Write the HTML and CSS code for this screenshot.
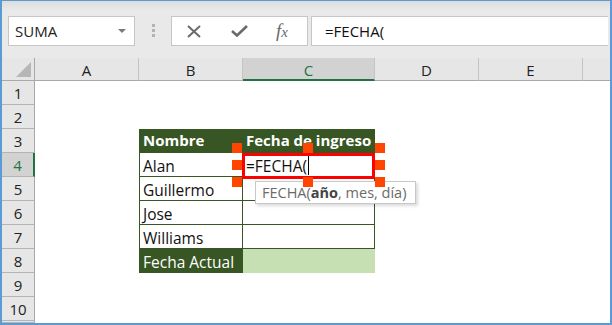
FILE: index.html
```html
<!doctype html>
<html lang="es">
<head>
  <meta charset="UTF-8">
  <meta name="viewport" content="width=device-width, initial-scale=1.0">
  <title>FECHA</title>
  <link rel="stylesheet" href="styles.css">
</head>
<body>
  <div class="window">
    <div class="toolbar">
      <div class="namebox">
        <span>SUMA</span>
        <span class="caret"></span>
      </div>
      <div class="grip"><i></i><i></i><i></i></div>
      <div class="fx-buttons">
        <svg width="16" height="13" viewBox="0 0 16 13"><path d="M2 1 L14 12 M14 1 L2 12" stroke="#6a6a6a" stroke-width="2" fill="none"/></svg>
        <svg width="17" height="12" viewBox="0 0 17 12"><path d="M1 6 L6 10.5 L16 1" stroke="#6a6a6a" stroke-width="2.6" fill="none"/></svg>
        <span class="fx">f<small>x</small></span>
      </div>
      <div class="formula">=FECHA(</div>
    </div>

    <div class="sheet">
      <div class="ch corner"></div>
      <div class="ch">A</div>
      <div class="ch">B</div>
      <div class="ch active">C</div>
      <div class="ch">D</div>
      <div class="ch">E</div>
      <div class="ch last"></div>

      <div class="rh">1</div>
      <div class="rh">2</div>
      <div class="rh">3</div>
      <div class="rh active">4</div>
      <div class="rh">5</div>
      <div class="rh">6</div>
      <div class="rh">7</div>
      <div class="rh">8</div>
      <div class="rh">9</div>
      <div class="rh">10</div>
      <div class="rh"></div>

      <div class="data">
        <div class="cell head left">Nombre</div>
        <div class="cell head">Fecha de ingreso</div>
        <div class="cell left">Alan</div>
        <div class="cell editing">
          <span>=FECHA(</span><span class="cursor"></span>
          <div class="selection">
            <b class="h tl"></b><b class="h tm"></b><b class="h tr"></b>
            <b class="h ml"></b><b class="h mr"></b>
            <b class="h bl"></b><b class="h bm"></b><b class="h br"></b>
          </div>
          <div class="tip">FECHA(<strong>año</strong>, mes, día)</div>
        </div>
        <div class="cell left">Guillermo</div>
        <div class="cell"></div>
        <div class="cell left">Jose</div>
        <div class="cell"></div>
        <div class="cell left">Williams</div>
        <div class="cell"></div>
        <div class="cell total left">Fecha Actual</div>
        <div class="cell result"></div>
      </div>
    </div>
  </div>
</body>
</html>
```

FILE: styles.css
```css
* {
  box-sizing: border-box;
}
body {
  margin: 0;
  font-family: 'Open Sans', 'Noto Sans', sans-serif;
}
.window {
  width: 612px;
  height: 325px;
  border: 2px solid #5b9bd5;
  border-top-width: 1px;
  background: #fff;
  display: flex;
  flex-direction: column;
  overflow: hidden;
}
.toolbar {
  height: 57px;
  flex: none;
  display: flex;
  align-items: flex-start;
  padding: 15px 2px 0 6px;
  background: linear-gradient(#dcdcdc, #e9e9e9 9px, #e9e9e9);
}
.namebox {
  width: 127px;
  height: 30px;
  background: #fff;
  border: 1px solid #c6c6c6;
  display: flex;
  align-items: center;
  justify-content: space-between;
  padding: 0 8px 0 6px;
  font-size: 15px;
  color: #222;
}
.caret {
  width: 0;
  height: 0;
  border-left: 4px solid transparent;
  border-right: 4px solid transparent;
  border-top: 4px solid #7a7a7a;
}
.grip {
  margin: 8px 0 0 17px;
  display: flex;
  flex-direction: column;
  gap: 2px;
}
.grip i {
  width: 3px;
  height: 3px;
  background: #b3b3b3;
}
.fx-buttons {
  margin-left: 16px;
  width: 137px;
  height: 30px;
  background: #fff;
  border: 1px solid #c6c6c6;
  display: flex;
  align-items: center;
  padding: 0 0 0 14px;
  gap: 29px;
}
.fx {
  font-family: 'Liberation Serif', serif;
  font-style: italic;
  font-size: 19px;
  color: #6a6a6a;
  margin-left: -1px;
}
.fx small {
  font-size: 15px;
}
.formula {
  margin-left: 3px;
  flex: 1;
  height: 30px;
  background: #fff;
  border: 1px solid #c6c6c6;
  border-right: none;
  padding-left: 13px;
  font-size: 15px;
  line-height: 28px;
  color: #111;
}
.sheet {
  flex: 1;
  display: grid;
  grid-template-columns: 33px 104px 104px 132px 104px 104px 1fr;
  grid-template-rows: 23px repeat(10, 24px) 1fr;
}
.ch {
  background: #e6e6e6;
  border-bottom: 1px solid #a9a9a9;
  border-right: 1px solid #c4c4c4;
  font-size: 15px;
  color: #222;
  text-align: center;
  line-height: 24px;
}
.ch.corner {
  position: relative;
  border-right: 1px solid #a9a9a9;
}
.ch.corner::after {
  content: '';
  position: absolute;
  right: 3px;
  bottom: 3px;
  width: 15px;
  height: 15px;
  background: #b6b6b6;
  clip-path: polygon(100% 0, 100% 100%, 0 100%);
}
.ch.active {
  background: #d2d2d2;
  color: #217346;
  border-bottom: 2px solid #217346;
}
.ch.last {
  border-right: none;
}
.rh {
  grid-column: 1;
  background: #e6e6e6;
  border-right: 1px solid #a9a9a9;
  border-bottom: 1px solid #b4b4b4;
  font-size: 15px;
  color: #222;
  text-align: center;
  line-height: 24px;
}
.rh.active {
  background: #d2d2d2;
  color: #217346;
  border-right: 2px solid #217346;
}
.data {
  grid-column: 3 / 5;
  grid-row: 4 / 10;
  display: grid;
  grid-template-columns: 104px 132px;
  grid-template-rows: repeat(6, 24px);
}
.cell {
  position: relative;
  display: flex;
  align-items: flex-end;
  padding-left: 3px;
  font-size: 15.5px;
  line-height: 20px;
  color: #111;
  white-space: nowrap;
  border-bottom: 1px solid #375623;
  border-right: 1px solid #375623;
}
.cell.left {
  border-left: 1px solid #375623;
}
.cell.head {
  background: #375623;
  color: #fff;
  font-weight: bold;
  font-size: 15px;
  padding-bottom: 2px;
}
.cell.total {
  background: #375623;
  color: #fff;
}
.cell.result {
  background: #c6e0b4;
  border-color: #c6e0b4;
}
.cell.editing {
  padding-left: 3px;
}
.cursor {
  width: 1px;
  height: 19px;
  background: #000;
  margin: 0 0 1px 1px;
}
.selection {
  position: absolute;
  left: -1px;
  top: 0;
  width: 133px;
  height: 26px;
  border: 3px solid #ff0000;
  z-index: 2;
}
.h {
  position: absolute;
  width: 10px;
  height: 10px;
  background: #ff4500;
}
.tl { left: -13px; top: -13px; }
.tm { left: 58px; top: -13px; }
.tr { left: 130px; top: -13px; }
.ml { left: -13px; top: 4px; }
.mr { left: 130px; top: 4px; }
.bl { left: -13px; top: 21px; }
.bm { left: 58px; top: 21px; }
.br { left: 130px; top: 21px; }
.tip {
  position: absolute;
  left: 12px;
  top: 28px;
  width: 161px;
  height: 23px;
  background: #fff;
  border: 1px solid #c8c8c8;
  box-shadow: 2px 2px 3px rgba(0, 0, 0, 0.15);
  padding-left: 6px;
  font-size: 14.5px;
  line-height: 21px;
  color: #6b6b6b;
  z-index: 1;
}
.tip strong {
  color: #444;
}
```
